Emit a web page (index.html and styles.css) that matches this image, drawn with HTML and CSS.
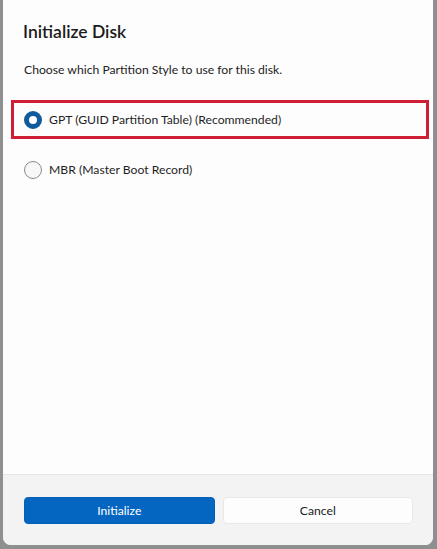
FILE: index.html
```html
<!DOCTYPE html>
<html>
<head>
<meta charset="utf-8">
<link rel="stylesheet" href="styles.css">
</head>
<body>
<div class="dialog">
  <div class="content">
    <h1 class="title">Initialize Disk</h1>
    <p class="desc">Choose which Partition Style to use for this disk.</p>
    <div class="options">
      <label class="option selected highlight">
        <span class="radio checked"></span>
        <span class="label">GPT (GUID Partition Table) (Recommended)</span>
      </label>
      <label class="option">
        <span class="radio"></span>
        <span class="label">MBR (Master Boot Record)</span>
      </label>
    </div>
  </div>
  <div class="footer">
    <button class="btn primary">Initialize</button>
    <button class="btn secondary">Cancel</button>
  </div>
</div>
</body>
</html>
```
FILE: styles.css
```css
html, body {
  margin: 0;
  padding: 0;
}
body {
  width: 437px;
  height: 549px;
  background: #8f8f8f;
  font-family: "Lato", "Noto Sans", sans-serif;
  color: #1b1b1b;
  overflow: hidden;
}
.dialog {
  margin-left: 3px;
  width: 430px;
  height: 545px;
  background: #fdfdfd;
  border-radius: 0 0 8px 8px;
  display: flex;
  flex-direction: column;
  overflow: hidden;
}
.content {
  flex: 1;
  padding: 0 0 0 8px;
}
.title {
  margin: 0;
  padding: 20px 0 0 12px;
  font-size: 17.5px;
  font-weight: 600;
  line-height: 24px;
}
.desc {
  margin: 0;
  padding: 18px 0 0 13px;
  font-size: 12.2px;
  line-height: 16px;
  color: #222;
}
.options {
  margin-top: 22px;
  display: flex;
  flex-direction: column;
  gap: 11px;
  width: 418px;
}
.option {
  display: flex;
  align-items: center;
  gap: 7px;
  height: 39px;
  padding-left: 10px;
  box-sizing: border-box;
  border: 3px solid transparent;
  font-size: 12.2px;
}
.option.highlight {
  border-color: #cf1f35;
}
.radio {
  width: 18px;
  height: 18px;
  border-radius: 50%;
  border: 1px solid #8a8a8a;
  background: #f7f7f7;
  box-sizing: border-box;
}
.radio.checked {
  border: 5px solid #0f5c9c;
  background: #fff;
}
.label {
  color: #1f1f1f;
}
.footer {
  height: 71px;
  background: #f3f3f3;
  border-top: 1px solid #e6e6e6;
  display: flex;
  align-items: flex-start;
  gap: 8px;
  padding: 22px 20px 0 21px;
  box-sizing: border-box;
}
.btn {
  flex: 1;
  height: 27px;
  border-radius: 4px;
  font-family: "Lato", "Noto Sans", sans-serif;
  font-size: 12.2px;
}
.btn.primary {
  background: #0566c2;
  color: #fff;
  border: 1px solid #0560b8;
}
.btn.secondary {
  background: #fdfdfd;
  color: #1b1b1b;
  border: 1px solid #e8e8e8;
}
```
